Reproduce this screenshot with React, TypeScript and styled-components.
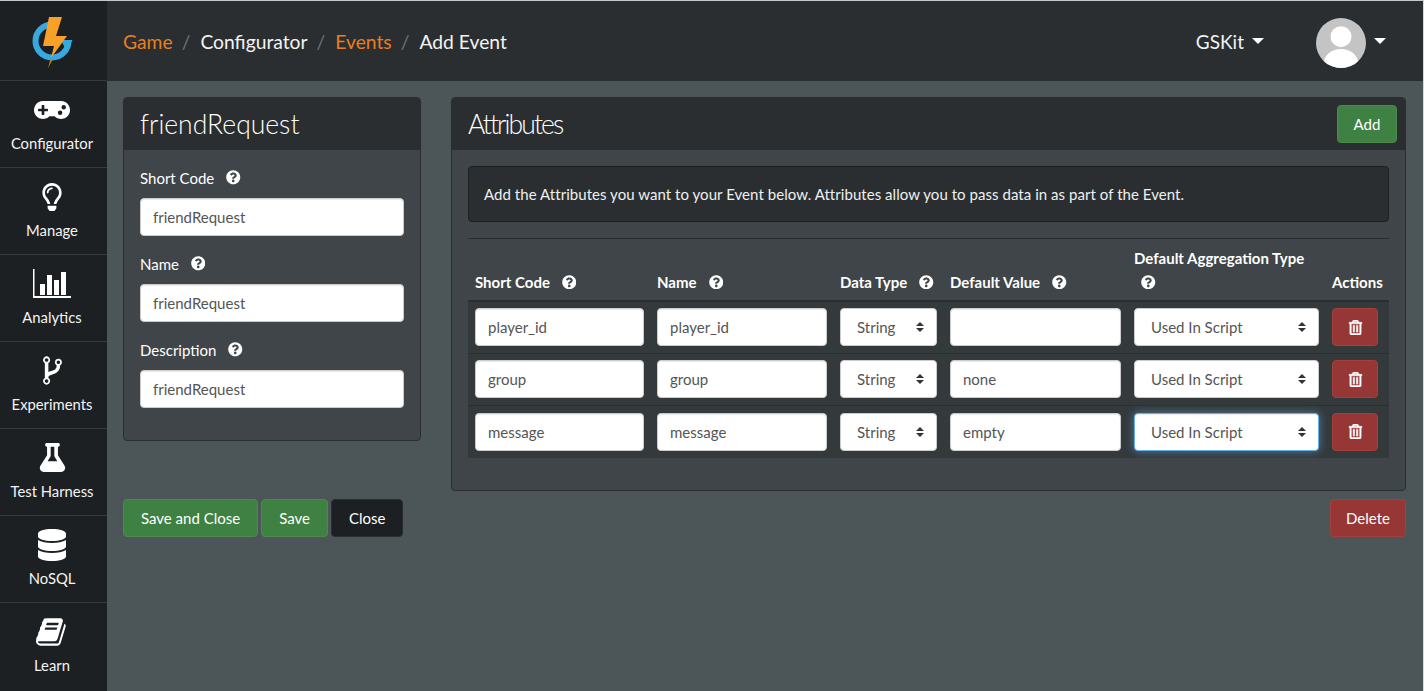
import React from 'react'
import styled, { createGlobalStyle } from 'styled-components'
import { FaDatabase, FaFlask, FaGamepad, FaQuestionCircle, FaRegLightbulb, FaRegTrashAlt } from 'react-icons/fa'

const GlobalStyle = createGlobalStyle`
    html, body {
        margin: 0;
        padding: 0;
        height: 100%;
        overflow: hidden;
        background: #4c5557;
        font-family: "Lato", "Liberation Sans", sans-serif;
        font-size: 15px;
        color: #fff;
    }
    * {
        box-sizing: border-box;
    }
`

const Page = styled.div`
    display: flex;
    height: 691px;
    width: 1424px;
    border-top: 1px solid #c8c8c8;
    border-right: 1px solid #d8d8d8;
    background: #4c5557;
`

const Sidebar = styled.nav`
    width: 107px;
    flex: none;
    background: #1c2022;
    display: flex;
    flex-direction: column;
`

const LogoCell = styled.div`
    height: 79px;
    flex: none;
    display: flex;
    align-items: center;
    justify-content: center;
    padding: 3px 3px 0 0;
`

const NavItem = styled.a`
    height: 87px;
    flex: none;
    border-top: 1px solid #363b3d;
    padding-right: 3px;
    display: flex;
    flex-direction: column;
    align-items: center;
    color: #f4f4f4;
    font-size: 14.8px;
    line-height: 18px;
`

const NavIcon = styled.span`
    height: 53px;
    padding-top: 4px;
    display: flex;
    align-items: center;
    justify-content: center;
    font-size: 36px;
    color: #fff;
`

const Main = styled.div`
    flex: 1;
    min-width: 0;
    display: flex;
    flex-direction: column;
`

const TopBar = styled.header`
    height: 80px;
    flex: none;
    background: #2a2e30;
    display: flex;
    align-items: center;
    padding: 0 37px 0 16px;
`

const Crumbs = styled.div`
    flex: 1;
    display: flex;
    align-items: center;
    font-size: 19.3px;
`

const Crumb = styled.span<{ $link?: boolean }>`
    color: ${props => (props.$link ? '#e67e22' : '#f4f4f4')};
`

const CrumbSlash = styled.span`
    color: #6c7476;
    margin: 0 10px 0 9px;
`

const AccountMenu = styled.div`
    display: flex;
    align-items: center;
    font-size: 19px;
    color: #f0f4f6;
`

const Caret = styled.span`
    display: inline-block;
    width: 0;
    height: 0;
    margin-left: 8px;
    border-left: 6px solid transparent;
    border-right: 6px solid transparent;
    border-top: 6px solid #fff;
`

const Avatar = styled.span`
    display: block;
    width: 50px;
    height: 50px;
    margin: 4px 0 0 52px;
`

const Content = styled.main`
    flex: 1;
    display: grid;
    grid-template-columns: 298px 955px;
    column-gap: 30px;
    align-content: start;
    align-items: start;
    padding: 16px 0 0 16px;
`

const Panel = styled.section`
    background: #3f4548;
    border: 1px solid #2a2e30;
    border-radius: 4px;
    overflow: hidden;
`

const PanelHeader = styled.div`
    height: 52px;
    background: #2a2e30;
    display: flex;
    align-items: center;
    justify-content: space-between;
    padding: 0 8px 0 16px;
    font-size: 26.5px;
    font-weight: 300;
`

const PanelTitle = styled.span<{ $tight?: boolean }>`
    letter-spacing: ${props => (props.$tight ? '-1.9px' : '0')};
`

const FormBody = styled.div`
    padding: 17px 16px 15px;
`

const FieldLabel = styled.label`
    display: flex;
    align-items: center;
    height: 21px;
    margin-bottom: 10px;
    font-size: 15px;
    font-weight: 400;
`

const HelpIcon = styled(FaQuestionCircle)`
    margin-left: 12px;
    font-size: 14.5px;
    color: #fff;
    flex: none;
`

const TextInput = styled.input`
    display: block;
    width: 100%;
    height: 38px;
    padding: 0 12px;
    border: 1px solid #ccc;
    border-radius: 4px;
    background: #fff;
    color: #555;
    font-family: inherit;
    font-size: 15px;
    outline: none;
    box-shadow: inset 0 1px 1px rgba(0, 0, 0, 0.08);
`

const FormInput = styled(TextInput)`
    margin-bottom: 17px;
`

const AttributesBody = styled.div`
    padding: 16px 16px 32px;
`

const Notice = styled.div`
    height: 56px;
    display: flex;
    align-items: center;
    padding: 0 15px;
    background: #2a2e30;
    border: 1px solid #1c2022;
    border-radius: 4px;
    font-size: 15px;
    letter-spacing: 0.05px;
    color: #eef0f0;
`

const Divider = styled.hr`
    margin: 16px 0 0;
    border: 0;
    border-top: 1px solid #2a2e30;
`

const AttributeGrid = styled.div`
    display: grid;
    grid-template-columns: 169px 170px 97px 171px 185px 46px;
    column-gap: 13px;
    padding: 0 11px 0 7px;
`

const HeadRow = styled(AttributeGrid)`
    height: 63px;
    align-items: end;
    padding-bottom: 6px;
    border-bottom: 2px solid #2a2e30;
`

const HeadCell = styled.div`
    display: flex;
    flex-wrap: wrap;
    align-items: center;
    font-size: 15px;
    font-weight: 700;
    line-height: 24px;
`

const BreakLabel = styled.span`
    flex: 0 0 100%;
`

const BreakHelp = styled(HelpIcon)`
    margin: 5px 0 5px 7px;
`

const BodyRow = styled(AttributeGrid)`
    height: 52px;
    align-items: center;
    background: #343a3c;
    border-bottom: 1px solid #2a2e30;
    padding-bottom: 1px;

    &:last-child {
        border-bottom: 0;
    }
`

const SelectWrap = styled.div`
    position: relative;
`

const SelectBox = styled.select<{ $focused?: boolean }>`
    display: block;
    width: 100%;
    height: 38px;
    padding: 0 12px 0 16px;
    appearance: none;
    border: 1px solid ${props => (props.$focused ? '#66afe9' : '#ccc')};
    border-radius: 4px;
    background: #fff;
    color: #555;
    font-family: inherit;
    font-size: 15px;
    outline: none;
    box-shadow: ${props =>
        props.$focused ? 'inset 0 1px 1px rgba(0,0,0,.075), 0 0 8px rgba(102,175,233,.6)' : 'none'};
`

const SelectArrows = styled.svg`
    position: absolute;
    right: 13px;
    top: 14px;
    width: 8px;
    height: 10px;
    pointer-events: none;
`

const Button = styled.button<{ $tone: 'green' | 'red' | 'black' }>`
    height: 38px;
    padding: 0 17px;
    border-radius: 4px;
    font-family: inherit;
    font-size: 15px;
    color: #fff;
    cursor: pointer;
    background: ${props => ({ green: '#3f8142', red: '#963735', black: '#1c2022' })[props.$tone]};
    border: 1px solid ${props => ({ green: '#4a8a4d', red: '#a2403e', black: '#2a2e30' })[props.$tone]};
`

const AddButton = styled(Button)`
    width: 60px;
    padding: 0;
`

const DeleteButton = styled(Button)`
    width: 76px;
    padding: 0;
`

const TrashButton = styled(Button)`
    width: 46px;
    padding: 0;
    display: flex;
    align-items: center;
    justify-content: center;
    font-size: 15px;
    color: #fff;

    svg {
        stroke: #fff;
        stroke-width: 18px;
    }
`

const Actions = styled.div`
    display: flex;
    gap: 3px;
    margin-top: 58px;
`

const DeleteRow = styled.div`
    display: flex;
    justify-content: flex-end;
    margin-top: 8px;
`

const Logo = () => (
    <svg width="52" height="60" viewBox="0 0 52 60">
        <path
            d="M42.5 29 A16.5 16.5 0 1 1 26 12.5"
            fill="none"
            stroke="#37a9e1"
            strokeWidth="6"
        />
        <path d="M35 28 L46.5 28 L42 36 L39 36 Z" fill="#37a9e1" />
        <path
            d="M23 5 L36 5 L30 24 L41 24 L25 46 L28 34 L17 34 Z"
            fill="#f7a128"
        />
        <path d="M24.5 47 L27 47 L22 56 Z" fill="#c47f20" />
    </svg>
)

const BarChartIcon = () => (
    <svg width="40" height="30" viewBox="0 0 40 30">
        <path d="M1 0h1.5v27H39v2H1z" fill="#fff" />
        <rect x="8" y="15" width="5" height="11" fill="#fff" />
        <rect x="15" y="6" width="5" height="20" fill="#fff" />
        <rect x="22" y="11" width="5" height="15" fill="#fff" />
        <rect x="29" y="3" width="5" height="23" fill="#fff" />
    </svg>
)

const ForkIcon = () => (
    <svg width="33" height="33" viewBox="0 0 1792 1792">
        <path
            fill="#fff"
            d="M672 1472q0-40-28-68t-68-28-68 28-28 68 28 68 68 28 68-28 28-68zm0-1152q0-40-28-68t-68-28-68 28-28 68 28 68 68 28 68-28 28-68zm640 128q0-40-28-68t-68-28-68 28-28 68 28 68 68 28 68-28 28-68zm96 0q0 52-26 96.5t-70 69.5q-2 287-226 414-67 38-203 81-128 40-169.5 71t-41.5 100v26q44 25 70 69.5t26 96.5q0 80-56 136t-136 56-136-56-56-136q0-52 26-96.5t70-69.5v-820q-44-25-70-69.5t-26-96.5q0-80 56-136t136-56 136 56 56 136q0 52-26 96.5t-70 69.5v497q54-26 154-57 55-17 87.5-29.5t70.5-31 59-39.5 40.5-51 28-69.5 8.5-91.5q-44-25-70-69.5t-26-96.5q0-80 56-136t136-56 136 56 56 136z"
        />
    </svg>
)

const BookIcon = () => (
    <svg width="32" height="32" viewBox="0 0 1792 1792">
        <path
            fill="#fff"
            d="M1639 478q40 57 18 129l-275 906q-19 64-76.5 107.5t-122.5 43.5h-923q-77 0-148.5-53.5t-99.5-131.5q-24-67-2-127 0-4 3-27t4-37q1-8-3-21.5t-3-19.5q2-11 8-21t16.5-23.5 16.5-23.5q23-38 45-91.5t30-91.5q3-10 .5-30t-.5-28q3-11 17-28t17-23q21-36 42-92t25-90q1-9-2.5-32t.5-28q4-13 22-30.5t22-22.5q19-26 42.5-84.5t27.5-96.5q1-8-3-25.5t-2-26.5q2-8 9-18t18-23 17-21q8-12 16.5-30.5t15-35 16-36 19.5-32 26.5-23.5 36-11.5 47.5 5.5l-1 3q38-9 51-9h761q74 0 114 56t18 130l-274 906q-36 119-71.5 153.5t-128.5 34.5h-869q-27 0-38 15-11 16-1 43 24 70 144 70h923q29 0 56-15.5t35-41.5l300-987q7-22 5-57 38 15 59 43zm-1064 2q-4 13 2 22.5t20 9.5h608q13 0 25.5-9.5t16.5-22.5l21-64q4-13-2-22.5t-20-9.5h-608q-13 0-25.5 9.5t-16.5 22.5zm-83 256q-4 13 2 22.5t20 9.5h608q13 0 25.5-9.5t16.5-22.5l21-64q4-13-2-22.5t-20-9.5h-608q-13 0-25.5 9.5t-16.5 22.5z"
        />
    </svg>
)

const UserAvatar = () => (
    <Avatar>
        <svg width="50" height="50" viewBox="0 0 50 50">
            <defs>
                <clipPath id="avatar-clip">
                    <circle cx="25" cy="25" r="25" />
                </clipPath>
            </defs>
            <g clipPath="url(#avatar-clip)">
                <rect width="50" height="50" fill="#c4c4c4" />
                <circle cx="25" cy="18.7" r="10.5" fill="#fff" />
                <ellipse cx="25" cy="45" rx="17" ry="14" fill="#fff" />
            </g>
        </svg>
    </Avatar>
)

const Arrows = () => (
    <SelectArrows viewBox="0 0 8 10">
        <path d="M4 0L8 4H0z M4 10L0 6h8z" fill="#333" />
    </SelectArrows>
)

const navItems = [
    { label: 'Configurator', icon: <FaGamepad /> },
    { label: 'Manage', icon: <FaRegLightbulb style={{ fontSize: 28 }} /> },
    { label: 'Analytics', icon: <BarChartIcon /> },
    { label: 'Experiments', icon: <ForkIcon /> },
    { label: 'Test Harness', icon: <FaFlask style={{ fontSize: 29 }} /> },
    { label: 'NoSQL', icon: <FaDatabase style={{ fontSize: 32 }} /> },
    { label: 'Learn', icon: <BookIcon /> },
]

const formFields = ['Short Code', 'Name', 'Description']

const columns = ['Short Code', 'Name', 'Data Type', 'Default Value']

const attributes = [
    { shortCode: 'player_id', name: 'player_id', value: '' },
    { shortCode: 'group', name: 'group', value: 'none' },
    { shortCode: 'message', name: 'message', value: 'empty' },
]

export default function App() {
    return (
        <Page>
            <GlobalStyle />
            <Sidebar>
                <LogoCell>
                    <Logo />
                </LogoCell>
                {navItems.map(item => (
                    <NavItem key={item.label}>
                        <NavIcon>{item.icon}</NavIcon>
                        {item.label}
                    </NavItem>
                ))}
            </Sidebar>
            <Main>
                <TopBar>
                    <Crumbs>
                        <Crumb $link>Game</Crumb>
                        <CrumbSlash>/</CrumbSlash>
                        <Crumb>Configurator</Crumb>
                        <CrumbSlash>/</CrumbSlash>
                        <Crumb $link>Events</Crumb>
                        <CrumbSlash>/</CrumbSlash>
                        <Crumb>Add Event</Crumb>
                    </Crumbs>
                    <AccountMenu>
                        GSKit
                        <Caret />
                        <UserAvatar />
                        <Caret />
                    </AccountMenu>
                </TopBar>
                <Content>
                    <div>
                        <Panel>
                            <PanelHeader>
                                <PanelTitle>friendRequest</PanelTitle>
                            </PanelHeader>
                            <FormBody>
                                {formFields.map(field => (
                                    <React.Fragment key={field}>
                                        <FieldLabel>
                                            {field}
                                            <HelpIcon />
                                        </FieldLabel>
                                        <FormInput defaultValue="friendRequest" />
                                    </React.Fragment>
                                ))}
                            </FormBody>
                        </Panel>
                        <Actions>
                            <Button $tone="green">Save and Close</Button>
                            <Button $tone="green">Save</Button>
                            <Button $tone="black">Close</Button>
                        </Actions>
                    </div>
                    <div>
                        <Panel>
                            <PanelHeader>
                                <PanelTitle $tight>Attributes</PanelTitle>
                                <AddButton $tone="green">Add</AddButton>
                            </PanelHeader>
                            <AttributesBody>
                                <Notice>
                                    Add the Attributes you want to your Event below. Attributes allow you to pass data in as part of the Event.
                                </Notice>
                                <Divider />
                                <HeadRow>
                                    {columns.map(column => (
                                        <HeadCell key={column}>
                                            {column}
                                            <HelpIcon />
                                        </HeadCell>
                                    ))}
                                    <HeadCell>
                                        <BreakLabel>Default Aggregation Type</BreakLabel>
                                        <BreakHelp />
                                    </HeadCell>
                                    <HeadCell>Actions</HeadCell>
                                </HeadRow>
                                {attributes.map((attribute, index) => (
                                    <BodyRow key={attribute.shortCode}>
                                        <TextInput defaultValue={attribute.shortCode} />
                                        <TextInput defaultValue={attribute.name} />
                                        <SelectWrap>
                                            <SelectBox defaultValue="String">
                                                <option>String</option>
                                                <option>Number</option>
                                            </SelectBox>
                                            <Arrows />
                                        </SelectWrap>
                                        <TextInput defaultValue={attribute.value} />
                                        <SelectWrap>
                                            <SelectBox defaultValue="Used In Script" $focused={index === 2}>
                                                <option>Used In Script</option>
                                                <option>Sum</option>
                                            </SelectBox>
                                            <Arrows />
                                        </SelectWrap>
                                        <TrashButton $tone="red" aria-label="Delete attribute">
                                            <FaRegTrashAlt />
                                        </TrashButton>
                                    </BodyRow>
                                ))}
                            </AttributesBody>
                        </Panel>
                        <DeleteRow>
                            <DeleteButton $tone="red">Delete</DeleteButton>
                        </DeleteRow>
                    </div>
                </Content>
            </Main>
        </Page>
    )
}
